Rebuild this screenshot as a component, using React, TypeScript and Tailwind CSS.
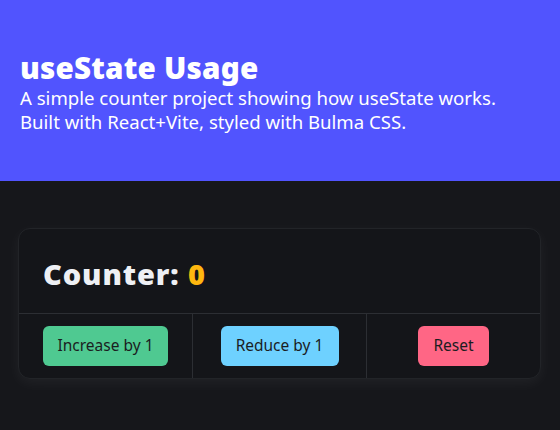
import { useState } from 'react'

const font = { fontFamily: '"Noto Sans", "Open Sans", sans-serif' }

export default function App() {
	const [count, setCount] = useState<number>(0)

	return (
		<div className="min-h-[430px] bg-[#16171b]" style={font}>
			<section className="h-[181px] bg-[#5154fe] px-5 pt-[50px]">
				<h1 className="text-[29.6px] font-black leading-[1.2] tracking-[0.2px] text-white">useState Usage</h1>
				<p className="text-[18.6px] leading-[24px] text-white">
					A simple counter project showing how useState works.
					<br />
					Built with React+Vite, styled with Bulma CSS.
				</p>
			</section>
			<div className="px-[18px] pr-[19px] pt-[47px]">
				<div className="rounded-xl border border-[#222428] bg-[#141519] shadow-[0_4px_14px_rgba(255,255,255,0.05)]">
					<div className="flex h-[84px] items-center px-6 pt-[6px]">
						<h2 className="text-[29px] font-black tracking-[0.9px] text-[#eef0f4]">
							Counter: <span className="text-[#ffb70f]">{count}</span>
						</h2>
					</div>
					<div className="flex border-t border-[#2c2e33]">
						<div className="flex flex-1 justify-center py-3">
							<button
								onClick={() => setCount(count + 1)}
								className="h-10 w-[125px] rounded-md bg-[#4fc991] text-[15.5px] text-[#1b1d1f]"
							>
								Increase by 1
							</button>
						</div>
						<div className="flex flex-1 justify-center border-l border-[#2c2e33] py-3">
							<button
								onClick={() => setCount(count - 1)}
								className="h-10 w-[118px] rounded-md bg-[#6ed1ff] text-[15.5px] text-[#1b1d1f]"
							>
								Reduce by 1
							</button>
						</div>
						<div className="flex flex-1 justify-center border-l border-[#2c2e33] py-3">
							<button
								onClick={() => setCount(0)}
								className="h-10 w-[71px] rounded-md bg-[#ff6685] text-[15.5px] text-[#1b1d1f]"
							>
								Reset
							</button>
						</div>
					</div>
				</div>
			</div>
		</div>
	)
}
